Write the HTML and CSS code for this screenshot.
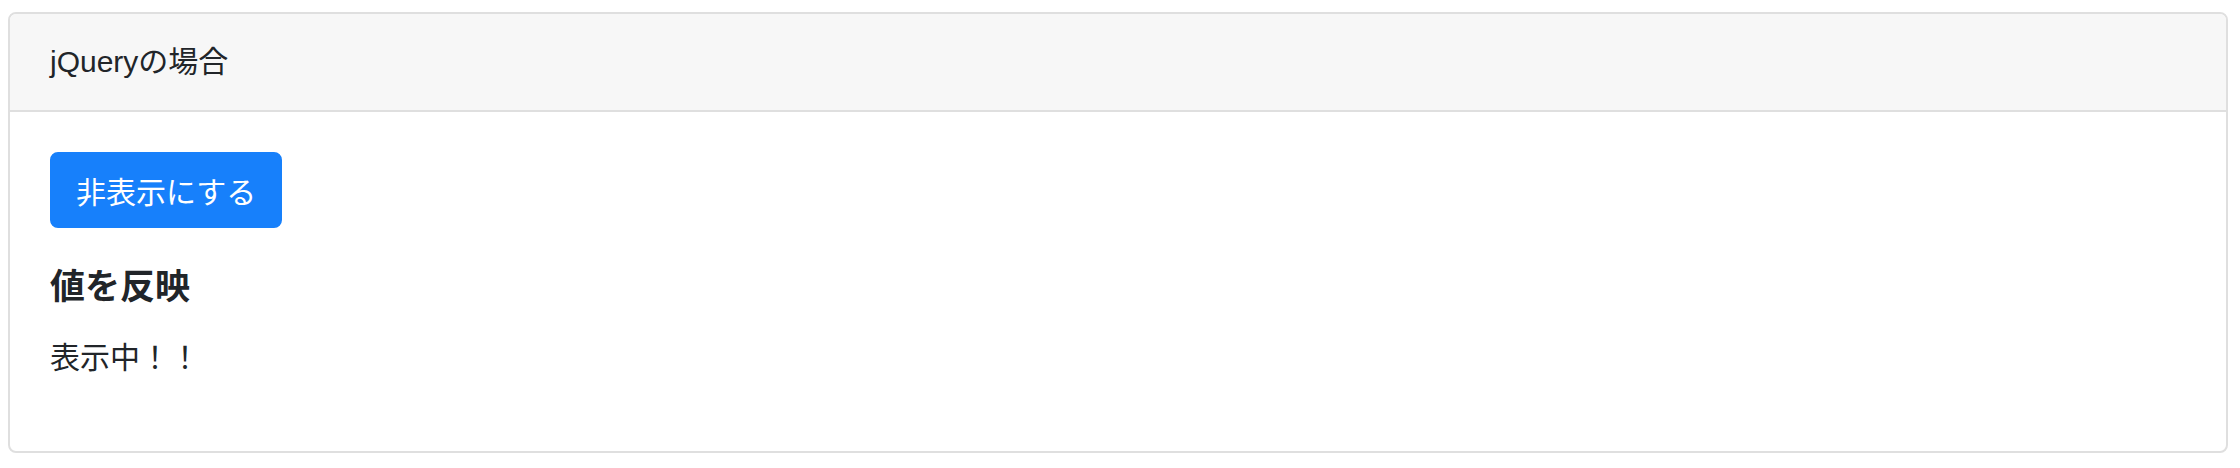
FILE: index.html
```html
<!DOCTYPE html>
<html lang="ja">
<head>
<meta charset="utf-8">
<title>jQueryの場合</title>
<link rel="stylesheet" href="styles.css">
</head>
<body>
<div class="card">
  <div class="card-header">jQueryの場合</div>
  <div class="card-body">
    <button class="btn">非表示にする</button>
    <h5 class="title">値を反映</h5>
    <p class="text">表示中！！</p>
  </div>
</div>
</body>
</html>
```
FILE: styles.css
```css
html, body {
  background: #ffffff;
}
body {
  margin: 12px 12px 0 8px;
  font-family: "Liberation Sans", "Noto Sans CJK JP", sans-serif;
  font-size: 30px;
  line-height: 48px;
  color: #212529;
}
.card {
  border: 2px solid #dfdfdf;
  border-radius: 8px;
  overflow: hidden;
  height: 441px;
  box-sizing: border-box;
  display: flex;
  flex-direction: column;
}
.card-header {
  background: #f7f7f7;
  border-bottom: 2px solid #dfdfdf;
  padding: 24px 40px;
  height: 48px;
}
.card-body {
  padding: 40px;
  display: flex;
  flex-direction: column;
  align-items: flex-start;
}
.btn {
  font-family: "Liberation Sans", "Noto Sans CJK JP", sans-serif;
  font-size: 30px;
  line-height: 48px;
  height: 76px;
  padding: 15px 24px 9px;
  border: 2px solid #1780fb;
  background: #1780fb;
  color: #ffffff;
  border-radius: 8px;
  box-sizing: border-box;
}
.title {
  margin: 35px 0 23px;
  font-size: 35px;
  line-height: 48px;
  font-weight: 700;
}
.text {
  margin: 0;
}
```
